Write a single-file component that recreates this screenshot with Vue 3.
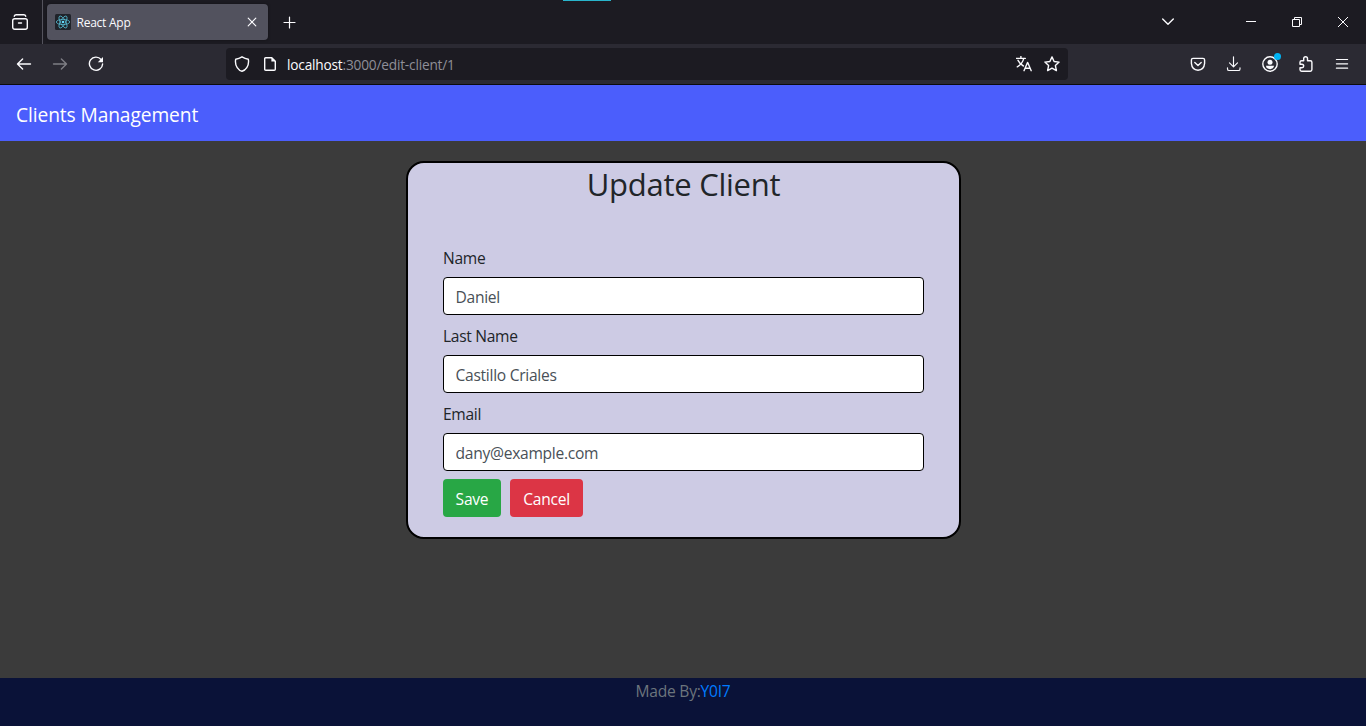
<script setup>
import { ref } from 'vue'

const fields = ref([
  { id: 'name', label: 'Name', value: 'Daniel' },
  { id: 'last', label: 'Last Name', value: 'Castillo Criales' },
  { id: 'email', label: 'Email', value: 'dany@example.com' },
])
</script>

<template>
  <div class="window">
    <div class="tabs">
      <i class="loading"></i>
      <div class="view">
        <svg width="16" height="16" viewBox="0 0 16 16" class="ic"><rect x=".7" y="4.7" width="14.6" height="10.6" rx="2" /><path d="M2.2 2.2Q2.7.7 4.2.7h7.6q1.5 0 2 1.5M6.5 9h3" /></svg>
      </div>
      <div class="tab">
        <svg width="16" height="16" viewBox="0 0 16 16"><rect width="16" height="16" rx="1.5" fill="#20232a" /><g fill="none" stroke="#55b9d0" stroke-width=".8"><ellipse cx="8" cy="8" rx="6.7" ry="2.6" /><ellipse cx="8" cy="8" rx="6.7" ry="2.6" transform="rotate(60 8 8)" /><ellipse cx="8" cy="8" rx="6.7" ry="2.6" transform="rotate(120 8 8)" /></g><circle cx="8" cy="8" r="1.3" fill="#61dafb" /></svg>
        <span class="tabname">React App</span>
        <svg width="10" height="10" viewBox="0 0 10 10" class="ic thin"><path d="M1.2 1.2l7.6 7.6M8.8 1.2L1.2 8.8" /></svg>
      </div>
      <svg width="13" height="13" viewBox="0 0 13 13" class="ic plus"><path d="M6.5 1v11M1 6.5h11" /></svg>
      <div class="controls">
        <svg width="12" height="8" viewBox="0 0 12 8" class="ic chev"><path d="M.7 1L6 6.2 11.3 1" /></svg>
        <svg width="10" height="10" viewBox="0 0 10 10" class="ic sharp"><path d="M0 4.5h10" /></svg>
        <svg width="10" height="10" viewBox="0 0 10 10" class="ic sharp"><path d="M.5 2.5h7v7h-7zM2.5 2.5v-2h7v7h-2" /></svg>
        <svg width="10" height="10" viewBox="0 0 10 10" class="ic sharp"><path d="M0 0l10 10M10 0L0 10" /></svg>
      </div>
    </div>

    <div class="toolbar">
      <div class="nav">
        <svg width="16" height="16" viewBox="0 0 16 16" class="ic"><path d="M14.5 8H1.8M6.6 3L1.5 8l5.1 5" /></svg>
        <svg width="16" height="16" viewBox="0 0 16 16" class="ic dim"><path d="M1.5 8h12.7M9.4 3l5.1 5-5.1 5" /></svg>
        <svg width="16" height="16" viewBox="0 0 16 16" class="ic"><path d="M13.1 3.5A6.6 6.6 0 1 0 14.6 8" /><path d="M15 1v5.2H9.8z" class="solid" /></svg>
      </div>
      <div class="address">
        <svg width="16" height="16" viewBox="0 0 16 16" class="ic"><path d="M8 .8Q11 2.6 14.3 3.2 15.2 8 12.8 11.7 10.7 14.8 8 15.3 5.3 14.8 3.2 11.7.8 8 1.7 3.2 5 2.6 8 .8z" /></svg>
        <svg width="14" height="16" viewBox="0 0 14 16" class="ic doc"><path d="M2.7 1.7h6.1l3.5 3.5v8q0 1.1-1.1 1.1H2.8q-1.1 0-1.1-1.1V2.8q0-1.1 1-1.1z" /><path d="M8.4 1.3v4.2h4.3z" class="solid" /></svg>
        <span class="url"><b>localhost</b>:3000/edit-client/1</span>
        <svg width="16" height="16" viewBox="0 0 16 16" class="ic lang"><path d="M.5 2.4h8.8M4.9.5v1.9M2 4.3q2.2 4.1 5.4 5.7M7.8 2.4Q6.3 8.1 1.3 10.8M8 14.7l3.5-8.3h.2l3.5 8.3M9.2 12.2h4.9" /></svg>
        <svg width="16" height="16" viewBox="0 0 16 16" class="ic"><path d="M8 .9l2.1 4.6 5 .6-3.7 3.5 1 5L8 12.1l-4.4 2.5 1-5L.9 6.1l5-.6z" /></svg>
      </div>
      <div class="actions">
        <svg width="16" height="16" viewBox="0 0 16 16" class="ic"><path d="M3 2.4h10q1.6 0 1.6 1.6v3.4Q14 13.9 8 14.2 2 13.9 1.4 7.4V4Q1.4 2.4 3 2.4zM4.8 6.5L8 9.4l3.2-2.9" /></svg>
        <svg width="16" height="16" viewBox="0 0 16 16" class="ic thin"><path d="M7.5.7v10M3.5 6.9l4 3.9 4-3.9M1.5 11.8v1.1q0 1.6 1.6 1.6h9.3q1.6 0 1.6-1.6v-1.1" /></svg>
        <span class="account">
          <svg width="16" height="16" viewBox="0 0 16 16" class="ic"><circle cx="8" cy="8" r="7.2" /><circle cx="8" cy="6.3" r="2.5" class="solid" /><path d="M3.9 9.8h8.2q-.7 3.2-4.1 3.4-3.4-.2-4.1-3.4z" class="solid" /></svg>
          <i></i>
        </span>
        <svg width="16" height="16" viewBox="0 0 16 16" class="ic"><path d="M5.7 4.7V2.6a1.9 1.9 0 0 1 3.8 0v2.1h2.9q1.5 0 1.5 1.5v7.4q0 1.6-1.6 1.6H3.6q-1.6 0-1.6-1.6v-1.8h1.9a1.8 1.8 0 0 0 0-3.6H2V6.2q0-1.5 1.6-1.5z" /></svg>
        <svg width="16" height="16" viewBox="0 0 16 16" class="ic menu"><path d="M2.4 3.5h11.2M2.4 7.8h11.2M2.4 12.2h11.2" /></svg>
      </div>
    </div>

    <header class="brand"><span>Clients Management</span></header>

    <main>
      <form class="card" @submit.prevent>
        <h2>Update Client</h2>
        <div v-for="f in fields" :key="f.id" class="group">
          <label :for="f.id">{{ f.label }}</label>
          <input :id="f.id" v-model="f.value" type="text" />
        </div>
        <div class="buttons">
          <button class="save">Save</button>
          <button class="cancel">Cancel</button>
        </div>
      </form>
    </main>

    <footer><span>Made By:<a>Y0I7</a></span></footer>
  </div>
</template>

<style>
body { margin: 0; background: #3b3b3b; overflow: hidden; }
</style>

<style scoped>
* { box-sizing: border-box; }
.window { width: 1366px; height: 726px; display: flex; flex-direction: column; overflow: hidden; font-family: "Open Sans", "Noto Sans", sans-serif; font-size: 15.6px; color: #212529; }
svg { display: block; flex: none; }
.ic { fill: none; stroke: #fbfbfe; stroke-width: 1.4; stroke-linecap: round; stroke-linejoin: round; }
.solid { fill: #fbfbfe; stroke: none; }
.thin { stroke-width: 1.15; }
.sharp { stroke-width: 1; stroke-linecap: butt; stroke-linejoin: miter; }
.dim { opacity: .4; }

.tabs { position: relative; flex: 0 0 44px; display: flex; align-items: center; background: #1c1b22; }
.loading { position: absolute; left: 563px; top: 0; width: 48px; height: 1px; background: #29b5cc; }
.view { width: 43px; height: 44px; padding: 14px 0 0 12px; border-right: 1px solid #54535d; }
.tab { width: 221px; height: 36px; margin-left: 4px; padding: 0 11px 0 8px; display: flex; align-items: center; border-radius: 4px; background: #52525e; box-shadow: 0 0 3px rgba(0, 0, 0, .4); }
.tabname { flex: 1; margin-left: 5.5px; font-size: 12px; letter-spacing: -.25px; color: #fbfbfe; }
.plus { margin-left: 15px; stroke-width: 1.2; }
.controls { margin-left: auto; padding-right: 18px; display: flex; align-items: center; gap: 36px; }
.chev { margin-right: 36px; }

.toolbar { flex: 0 0 41px; display: flex; align-items: center; background: #2b2a33; border-bottom: 1px solid #0c0c0d; }
.nav { width: 226px; padding-left: 16px; display: flex; gap: 20px; }
.address { width: 842px; height: 32px; padding: 0 8px; display: flex; align-items: center; border-radius: 4px; background: #1c1b22; }
.doc { margin-left: 13px; }
.url { flex: 1; margin-left: 10px; padding-top: 1px; font-size: 13.7px; letter-spacing: -.2px; color: #8f8f98; }
.url b { font-weight: 400; color: #fbfbfe; }
.lang { margin-right: 12px; }
.actions { margin-left: auto; padding-right: 16px; display: flex; gap: 20px; }
.account { position: relative; }
.account i { position: absolute; left: 12px; top: -3px; width: 7px; height: 7px; border-radius: 50%; background: #00b3f4; }
.menu { stroke-width: 1.2; }

.brand { flex: 0 0 56px; padding: 2px 0 0 16px; display: flex; align-items: center; background: #4b5efc; color: #fff; font-size: 19.2px; letter-spacing: -.1px; }
main { flex: 1; padding-top: 20px; background: #3b3b3b; }
.card { width: 555px; height: 378px; margin-left: 406px; padding: 0 35px; border: 2px solid #000; border-radius: 18px; background: #cdcbe4; }
h2 { height: 78px; margin: 0; font-size: 31px; font-weight: 400; line-height: 42px; letter-spacing: -.25px; text-align: center; }
.group { height: 78px; }
label { display: block; height: 36px; line-height: 35px; letter-spacing: -.32px; }
input { display: block; width: 481px; height: 38px; padding: 2px 12px 0 11.5px; border: 1px solid #000; border-radius: 4px; outline: 0; background: #fff; color: #495057; font: inherit; letter-spacing: -.28px; }
.buttons { padding-top: 4px; display: flex; gap: 9px; }
button { height: 38px; padding: 2px 0 0; border: 0; border-radius: 4px; color: #fff; font: inherit; letter-spacing: -.25px; }
.save { width: 58px; background: #28a745; }
.cancel { width: 73px; background: #dc3545; }
footer { flex: 0 0 48px; background: #0a1238; color: #6c757d; text-align: center; line-height: 27px; letter-spacing: -.25px; }
a { color: #007bff; }
</style>
